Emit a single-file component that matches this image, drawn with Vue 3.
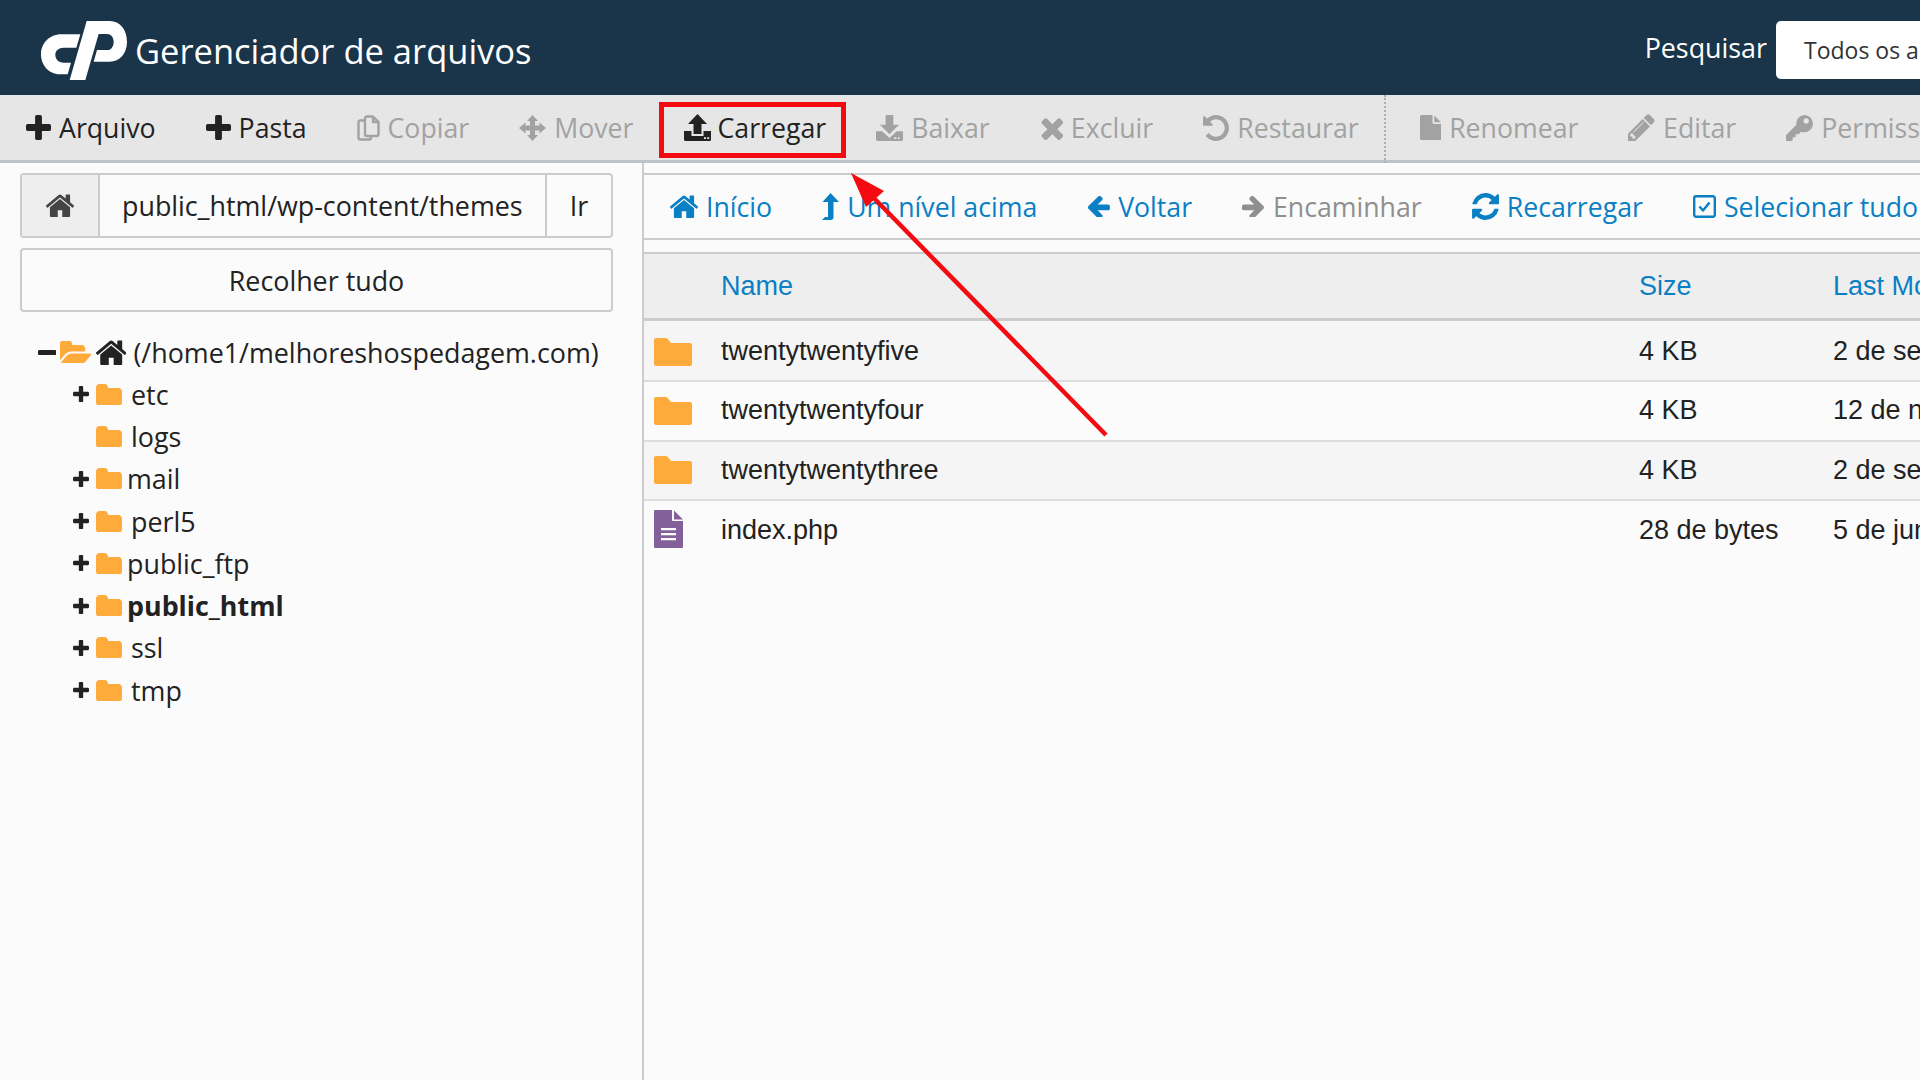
<template>
  <div class="page">
    <header class="top">
      <svg class="logo" viewBox="32 33 258 177">
        <path d="M150 73 L138 113 H100 C85 113 75 122 75 135 C75 148 85 158 100 158 H122 L112 193 H88 C55 193 32 165 32 133 C32 100 58 73 92 73 Z" />
        <path d="M169 33 H238 C270 33 290 60 290 95 C290 130 268 155 238 155 H190 L200 120 H232 C242 120 250 110 250 95 C250 82 242 72 230 72 H205 L165 210 H118 Z" />
      </svg>
      <span class="title">Gerenciador de arquivos</span>
      <div class="search">
        <span class="search-label">Pesquisar</span>
        <div class="search-select">Todos os arquivos</div>
      </div>
    </header>

    <div class="toolbar">
      <template v-for="b in toolbar" :key="b.label">
        <span v-if="b.sep" class="sep"></span>
        <div class="tool" :class="{ off: b.off, marked: b.marked }">
          <svg class="ic" :style="{ height: icons[b.icon].h + 'px' }" :viewBox="icons[b.icon].vb">
            <path v-if="!icons[b.icon].lines" :d="icons[b.icon].d" />
            <path v-else class="outline" :d="icons[b.icon].d" />
          </svg>
          <span>{{ b.label }}</span>
        </div>
      </template>
    </div>

    <div class="main">
      <aside class="side">
        <div class="path-box">
          <div class="path-home">
            <svg class="ic" style="height: 23px" :viewBox="icons.home.vb"><path :d="icons.home.d" /></svg>
          </div>
          <div class="path-input">public_html/wp-content/themes</div>
          <div class="path-go">Ir</div>
        </div>
        <div class="collapse">Recolher tudo</div>

        <div class="tree">
          <div class="tree-row root">
            <span class="toggle"><svg class="ic" style="height: 5px" :viewBox="icons.minus.vb"><path :d="icons.minus.d" /></svg></span>
            <svg class="ic folder-ic" style="height: 22.6px" :viewBox="icons.folderOpen.vb"><path :d="icons.folderOpen.d" /></svg>
            <svg class="ic root-home" style="height: 25px" :viewBox="icons.home.vb"><path :d="icons.home.d" /></svg>
            <span class="root-label">(/home1/melhoreshospedagem.com)</span>
          </div>
          <div v-for="t in tree" :key="t.name" class="tree-row child">
            <span class="toggle">
              <svg v-if="t.plus" class="ic" style="height: 16px" :viewBox="icons.plus.vb"><path :d="icons.plus.d" /></svg>
            </span>
            <svg class="ic folder-ic" style="height: 21px" :viewBox="icons.folder.vb"><path :d="icons.folder.d" /></svg>
            <span :class="{ near: t.near, strong: t.strong }" class="tree-label">{{ t.name }}</span>
          </div>
        </div>
      </aside>

      <section class="content">
        <nav class="nav">
          <div v-for="n in nav" :key="n.label" class="nav-item" :class="{ off: n.off }">
            <svg class="ic" :style="{ height: icons[n.icon].h + 'px' }" :viewBox="icons[n.icon].vb">
              <path v-if="!icons[n.icon].lines" :d="icons[n.icon].d" />
              <path v-else class="outline" :d="icons[n.icon].d" />
            </svg>
            <span>{{ n.label }}</span>
          </div>
        </nav>

        <div class="files">
          <div class="file-row head">
            <div></div>
            <div>Name</div>
            <div>Size</div>
            <div>Last Modified</div>
          </div>
          <div v-for="f in files" :key="f.name" class="file-row">
            <div class="file-ic">
              <svg v-if="f.folder" class="big-folder" viewBox="0 0 38 28">
                <path d="M2 0h9.5c1 0 1.6.4 2.2 1l3.3 4h19a2 2 0 0 1 2 2v19a2 2 0 0 1-2 2H2a2 2 0 0 1-2-2V2a2 2 0 0 1 2-2z" />
              </svg>
              <svg v-else class="big-file" viewBox="0 0 29 38">
                <path d="M1 0h17v10a1 1 0 0 0 1 1h10v26a1 1 0 0 1-1 1H1a1 1 0 0 1-1-1V1a1 1 0 0 1 1-1z" />
                <path d="M20 0.5 29 9.5H20z" />
                <path class="doc-line" d="M7 18h15v2.2H7zM7 23h15v2.2H7zM7 28h15v2.2H7z" />
              </svg>
            </div>
            <div>{{ f.name }}</div>
            <div>{{ f.size }}</div>
            <div>{{ f.date }}</div>
          </div>
        </div>
      </section>
    </div>

    <!-- seta de anotacao por cima da tela -->
    <svg class="arrow" viewBox="0 0 1920 1080">
      <line x1="1106" y1="435" x2="866" y2="190" />
      <path d="M851 173 L884 191 L866 207 Z" />
    </svg>
  </div>
</template>

<script setup>
const icons = {
  plus: { vb: '192 128 1408 1408', h: 25, d: 'M1600 736v192q0 40-28 68t-68 28h-416v416q0 40-28 68t-68 28h-192q-40 0-68-28t-28-68v-416h-416q-40 0-68-28t-28-68v-192q0-40 28-68t68-28h416v-416q0-40 28-68t68-28h192q40 0 68 28t28 68v416h416q40 0 68 28t28 68z' },
  minus: { vb: '192 640 1408 384', h: 5, d: 'M1600 736v192q0 40-28 68t-68 28h-1216q-40 0-68-28t-28-68v-192q0-40 28-68t68-28h1216q40 0 68 28t28 68z' },
  copy: { vb: '0 0 23 26', h: 26, lines: true, d: 'M8 5.5H3A2 2 0 0 0 1.5 7.5V22.5A2 2 0 0 0 3.5 24.5H12A2 2 0 0 0 14 22.5V21M10 1.5H16L21.5 7V19A2 2 0 0 1 19.5 21H10A2 2 0 0 1 8 19V3.5A2 2 0 0 1 10 1.5ZM16 1.5V7H21.5' },
  move: { vb: '0 0 27 26', h: 26, d: 'M13.5 0 19 6H16V10.5H20.5V7.5L27 13 20.5 18.5V15.5H16V20H19L13.5 26 8 20H11V15.5H6.5V18.5L0 13 6.5 7.5V10.5H11V6H8Z' },
  upload: { vb: '0 0 27 27', h: 27, d: 'M13.5 0 23 10H17.5V20H9.5V10H4ZM0 17H7.5V22H19.5V17H27V25.5A1.5 1.5 0 0 1 25.5 27H1.5A1.5 1.5 0 0 1 0 25.5ZM20 23.2V25H22V23.2ZM23.2 23.2V25H25.2V23.2Z' },
  download: { vb: '0 0 28 27', h: 26, d: 'M10 0H18V10H24L14 20 4 10H10ZM0 17H6.5L14 24 21.5 17H28V25.5A1.5 1.5 0 0 1 26.5 27H1.5A1.5 1.5 0 0 1 0 25.5ZM19 23.2V25H21V23.2ZM22.5 23.2V25H24.5V23.2Z' },
  times: { vb: '218 238 1272 1316', h: 24, d: 'M1490 1322q0 40-28 68l-136 136q-28 28-68 28t-68-28l-294-294-294 294q-28 28-68 28t-68-28l-136-136q-28-28-28-68t28-68l294-294-294-294q-28-28-28-68t28-68l136-136q28-28 68-28t68 28l294 294 294-294q28-28 68-28t68 28l136 136q28 28 28 68t-28 68l-294 294 294 294q28 28 28 68z' },
  undo: { vb: '128 128 1536 1536', h: 26, d: 'M1664 896q0 156-61 298t-164 245-245 164-298 61q-172 0-327-72.5t-264-204.5q-7-10-6.5-22.5t8.5-20.5l137-138q10-9 25-9 16 2 23 12 73 95 179 147t225 52q104 0 198.5-40.5t163.5-109.5 109.5-163.5 40.5-198.5-40.5-198.5-109.5-163.5-163.5-109.5-198.5-40.5q-98 0-188 35.5t-160 101.5l137 138q31 30 14 69-17 40-59 40h-448q-26 0-45-19t-19-45v-448q0-42 40-59 39-17 69 14l130 129q107-101 244.5-156.5t284.5-55.5q156 0 298 61t245 164 164 245 61 298z' },
  file: { vb: '128 0 1536 1792', h: 25, d: 'M1152 512v-472q22 14 36 28l408 408q14 14 28 36h-472zm-128 32q0 40 28 68t68 28h544v1056q0 40-28 68t-68 28h-1344q-40 0-68-28t-28-68v-1600q0-40 28-68t68-28h800v544z' },
  pencil: { vb: '128 128 1515 1536', h: 27, d: 'M491 1536l91-91-235-235-91 91v107h128v128h107zm523-928q0-22-22-22-10 0-17 7l-542 542q-7 7-7 17 0 22 22 22 10 0 17-7l542-542q7-7 7-17zm-54-192l416 416-832 832h-416v-416zm683 96q0 53-37 90l-166 166-416-416 166-165q36-38 90-38 53 0 91 38l235 234q37 39 37 91z' },
  key: { vb: '0 0 28 27', h: 26, d: 'M19 0A9 9 0 0 1 19 18C17.8 18 16.8 17.8 15.8 17.4L13 20H10V23H7V26L6 27H1A1 1 0 0 1 0 26V21L10.6 10.4A9 9 0 0 1 19 0ZM21 3.5A2.7 2.7 0 1 0 21 8.9 2.7 2.7 0 0 0 21 3.5Z' },
  home: { vb: '97 224 1598 1312', h: 23, d: 'M1472 992v480q0 26-19 45t-45 19h-384v-384h-256v384h-384q-26 0-45-19t-19-45v-480q0-1 .5-3t.5-3l575-474 575 474q1 2 1 6zm223-69l-62 74q-8 9-21 11h-3q-13 0-21-7l-692-577-692 577q-12 8-24 7-13-2-21-11l-62-74q-8-10-7-23.5t11-21.5l719-599q32-26 76-26t76 26l244 204v-195q0-14 9-23t23-9h192q14 0 23 9t9 23v408l219 182q10 8 11 21.5t-7 23.5z' },
  levelUp: { vb: '0 0 17 27', h: 27, d: 'M8.5 0 17 9H11.5V24A3 3 0 0 1 8.5 27H0L3 24H6V9H.5Z' },
  arrowLeft: { vb: '128 192 1536 1408', h: 21, d: 'M1664 896v128q0 53-32.5 90.5t-84.5 37.5h-704l293 294q38 36 38 90t-38 90l-75 76q-37 37-90 37-52 0-91-37l-651-652q-37-37-37-90 0-52 37-91l651-650q38-38 91-38 52 0 90 38l75 74q38 38 38 91t-38 91l-293 293h704q52 0 84.5 37.5t32.5 90.5z' },
  arrowRight: { vb: '128 192 1536 1408', h: 21, d: 'M1600 960q0 54-37 91l-651 651q-39 37-91 37-51 0-90-37l-75-75q-38-38-38-91t38-91l293-293h-704q-52 0-84.5-37.5t-32.5-90.5v-128q0-53 32.5-90.5t84.5-37.5h704l-293-294q-38-36-38-90t38-90l75-75q38-38 90-38 53 0 91 38l651 651q37 35 37 90z' },
  refresh: { vb: '125 128 1539 1536', h: 27, d: 'M1639 1056q0 5-1 7-64 268-268 434.5t-478 166.5q-146 0-282.5-55t-243.5-157l-129 129q-19 19-45 19t-45-19-19-45v-448q0-26 19-45t45-19h448q26 0 45 19t19 45-19 45l-137 137q71 66 161 102t187 36q134 0 250-65t186-179q11-17 53-117 8-23 30-23h192q13 0 22.5 9.5t9.5 22.5zm25-800v448q0 26-19 45t-45 19h-448q-26 0-45-19t-19-45 19-45l138-138q-148-137-349-137-134 0-250 65t-186 179q-11 17-53 117-8 23-30 23h-199q-13 0-22.5-9.5t-9.5-22.5v-7q65-268 270-434.5t480-166.5q146 0 284 55.5t245 156.5l130-129q19-19 45-19t45 19 19 45z' },
  check: { vb: '0 0 23 23', h: 23, lines: true, d: 'M3 1.2H20A1.8 1.8 0 0 1 21.8 3V20A1.8 1.8 0 0 1 20 21.8H3A1.8 1.8 0 0 1 1.2 20V3A1.8 1.8 0 0 1 3 1.2ZM6.5 11.5 10 15.5 16.5 7.5' },
  folder: { vb: '0 128 1728 1344', h: 21, d: 'M1728 608v704q0 92-66 158t-158 66h-1216q-92 0-158-66t-66-158v-960q0-92 66-158t158-66h320q92 0 158 66t66 158v32h672q92 0 158 66t66 158z' },
  folderOpen: { vb: '0 128 1845 1344', h: 20, d: 'M1845 931q0 35-35 73l-336 396q-43 51-120.5 86.5t-143.5 35.5h-1088q-34 0-60.5-13t-26.5-43q0-35 35-73l336-396q43-51 120.5-86.5t143.5-35.5h1088q34 0 60.5 13t26.5 43zm-343-344v160h-832q-94 0-197 47.5t-164 119.5l-337 396-5 6q0-4-.5-12.5t-.5-12.5v-960q0-92 66-158t158-66h320q92 0 158 66t66 158v32h544q92 0 158 66t66 158z' },
}

const toolbar = [
  { label: 'Arquivo', icon: 'plus' },
  { label: 'Pasta', icon: 'plus' },
  { label: 'Copiar', icon: 'copy', off: true },
  { label: 'Mover', icon: 'move', off: true },
  { label: 'Carregar', icon: 'upload', marked: true },
  { label: 'Baixar', icon: 'download', off: true },
  { label: 'Excluir', icon: 'times', off: true },
  { label: 'Restaurar', icon: 'undo', off: true },
  { label: 'Renomear', icon: 'file', off: true, sep: true },
  { label: 'Editar', icon: 'pencil', off: true },
  { label: 'Permissões', icon: 'key', off: true },
]

const nav = [
  { label: 'Início', icon: 'home' },
  { label: 'Um nível acima', icon: 'levelUp' },
  { label: 'Voltar', icon: 'arrowLeft' },
  { label: 'Encaminhar', icon: 'arrowRight', off: true },
  { label: 'Recarregar', icon: 'refresh' },
  { label: 'Selecionar tudo', icon: 'check' },
]

const tree = [
  { name: 'etc', plus: true },
  { name: 'logs' },
  { name: 'mail', plus: true, near: true },
  { name: 'perl5', plus: true },
  { name: 'public_ftp', plus: true, near: true },
  { name: 'public_html', plus: true, near: true, strong: true },
  { name: 'ssl', plus: true },
  { name: 'tmp', plus: true },
]

const files = [
  { name: 'twentytwentyfive', size: '4 KB', date: '2 de set de 2025', folder: true },
  { name: 'twentytwentyfour', size: '4 KB', date: '12 de nov de 2024', folder: true },
  { name: 'twentytwentythree', size: '4 KB', date: '2 de set de 2025', folder: true },
  { name: 'index.php', size: '28 de bytes', date: '5 de jun de 2025' },
]
</script>

<style>
html,
body {
  margin: 0;
  background: #fbfbfb;
}
</style>

<style scoped>
.page {
  position: relative;
  width: 1920px;
  height: 1080px;
  overflow: hidden;
  display: flex;
  flex-direction: column;
  background: #fbfbfb;
  color: #222;
  font-family: "Open Sans", "Liberation Sans", sans-serif;
  font-size: 26.85px;
}
.ic {
  flex: none;
  display: block;
  fill: currentColor;
  fill-rule: evenodd;
}
.outline {
  fill: none;
  stroke: currentColor;
  stroke-width: 2.4;
  stroke-linejoin: round;
}

.top {
  flex: none;
  height: 95px;
  display: flex;
  align-items: center;
  background: #1a3549;
  color: #fff;
}
.logo {
  flex: none;
  height: 59px;
  margin-left: 41px;
  margin-top: 5px;
  fill: #fff;
}
.title {
  margin-left: 8px;
  margin-top: 5px;
  font-size: 34.5px;
}
.search {
  margin-left: auto;
  display: flex;
  align-items: center;
}
.search-label {
  margin-right: 9px;
}
.search-select {
  width: 116px;
  height: 58px;
  margin-top: 5px;
  padding-left: 28px;
  display: flex;
  align-items: center;
  overflow: hidden;
  white-space: nowrap;
  background: #fff;
  color: #333;
  font-size: 23px;
  border-radius: 5px 0 0 5px;
}

.toolbar {
  flex: none;
  height: 65px;
  padding-left: 1px;
  display: flex;
  align-items: center;
  background: #e6e6e6;
  border-bottom: 3px solid #bcc4c8;
  white-space: nowrap;
  font-size: 26.7px;
}
.tool {
  position: relative;
  height: 100%;
  padding: 0 25px;
  display: flex;
  align-items: center;
  gap: 8px;
}
.tool.off {
  color: #a2a2a2;
}
.marked {
  gap: 7px;
}
.marked::after {
  content: "";
  position: absolute;
  left: 0;
  right: 5px;
  top: 7px;
  bottom: 2px;
  border: 5px solid #f40b12;
}
.sep {
  align-self: stretch;
  margin-bottom: -3px;
  border-left: 2px dotted #b0b0b0;
  margin-right: 9px;
}

.main {
  flex: 1;
  min-height: 0;
  display: flex;
}
.side {
  flex: none;
  width: 593px;
  padding: 10px 29px 0 20px;
}
.path-box {
  height: 61px;
  display: flex;
  align-items: stretch;
  border: 2px solid #ccc;
  border-radius: 4px;
}
.path-home {
  width: 76px;
  display: flex;
  align-items: center;
  justify-content: center;
  background: #eee;
  color: #444;
  border-right: 2px solid #ccc;
}
.path-input {
  flex: 1;
  display: flex;
  align-items: center;
  padding-left: 22px;
}
.path-go {
  width: 64px;
  display: flex;
  align-items: center;
  justify-content: center;
  border-left: 2px solid #ccc;
}
.collapse {
  height: 60px;
  margin-top: 10px;
  display: flex;
  align-items: center;
  justify-content: center;
  border: 2px solid #ccc;
  border-radius: 4px;
}
.tree {
  margin-top: 19px;
  margin-left: 18px;
  white-space: nowrap;
}
.tree-row {
  height: 42.25px;
  display: flex;
  align-items: center;
}
.toggle {
  flex: none;
  display: block;
}
.root .toggle {
  width: 22px;
}
.child {
  padding-left: 35px;
}
.child .toggle {
  width: 22px;
}
.folder-ic {
  color: #ffab3c;
}
.root-home {
  margin-left: 5px;
}
.root-label {
  margin-left: 7px;
}
.tree-label {
  margin-left: 9px;
}
.tree-label.near {
  margin-left: 5px;
}
.strong {
  font-weight: 700;
}

.content {
  flex: 1;
  min-width: 0;
  overflow: hidden;
  padding-top: 10px;
  border-left: 2px solid #ccc;
}
.nav {
  height: 63px;
  padding-left: 1px;
  display: flex;
  align-items: center;
  white-space: nowrap;
  border-top: 2px solid #ccc;
  border-bottom: 2px solid #ccc;
  color: #0a7fc4;
  font-size: 26.7px;
}
.nav-item {
  flex: none;
  padding: 0 25px;
  display: flex;
  align-items: center;
  gap: 8px;
}
.nav-item.off {
  color: #8f8f8f;
}
.files {
  margin-top: 12px;
  border-top: 2px solid #ccc;
  font-family: "Liberation Sans", Arial, sans-serif;
  font-size: 27px;
  white-space: nowrap;
}
.file-row {
  width: 1400px;
  height: 59.5px;
  display: grid;
  grid-template-columns: 77px 918px 194px 211px;
  align-items: center;
  box-sizing: border-box;
  border-bottom: 2px solid #ddd;
}
.file-row:nth-child(even) {
  background: #f5f5f5;
}
.file-row:last-child {
  border-bottom: none;
}
.head {
  height: 67px;
  background: #eee;
  color: #0a7fc4;
  border-bottom: 3px solid #ccc;
}
.head + .file-row {
  height: 61px;
  padding-top: 2px;
}
.file-ic {
  padding-left: 10px;
}
.big-folder {
  display: block;
  width: 38px;
  height: 28px;
  fill: #ffab3c;
}
.big-file {
  display: block;
  width: 29px;
  height: 38px;
  margin-top: -3px;
  fill: #84609a;
}
.doc-line {
  fill: #fbfbfb;
}

.arrow {
  position: absolute;
  left: 0;
  top: 0;
  width: 1920px;
  height: 1080px;
  pointer-events: none;
  fill: #f40b12;
}
.arrow line {
  stroke: #f40b12;
  stroke-width: 4.5;
}
</style>
